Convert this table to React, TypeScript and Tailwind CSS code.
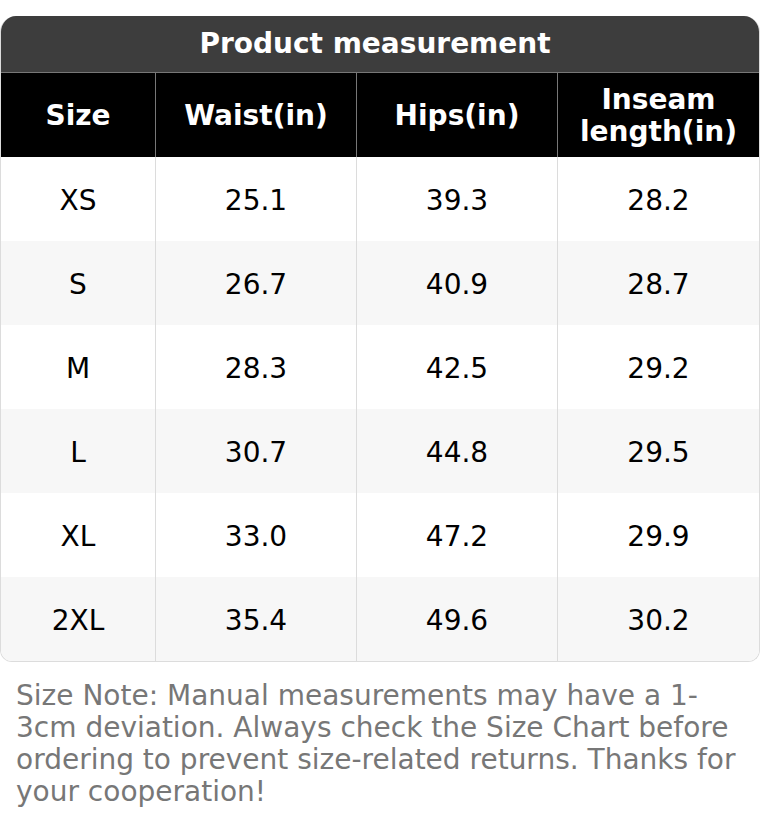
const headers = ["Size", "Waist(in)", "Hips(in)", "Inseam length(in)"];

const rows = [
    ["XS", "25.1", "39.3", "28.2"],
    ["S", "26.7", "40.9", "28.7"],
    ["M", "28.3", "42.5", "29.2"],
    ["L", "30.7", "44.8", "29.5"],
    ["XL", "33.0", "47.2", "29.9"],
    ["2XL", "35.4", "49.6", "30.2"],
];

const cols = "grid grid-cols-[154px_201px_201px_1fr]";

export default function App() {
    return (
        <div className="w-[760px] bg-white pt-4 font-['DejaVu_Sans',sans-serif]">
            <div className="rounded-t-[16px] rounded-b-[12px] overflow-hidden border border-[#dcdcdc] border-t-0">
                <div className="h-[57px] bg-[#3d3d3d] flex items-center justify-center pr-[10px] text-white text-[28px] font-bold border-b border-[#777]">
                    Product measurement
                </div>
                <div className={`${cols} bg-black text-white text-[28px] font-bold leading-[32px]`}>
                    {headers.map((h, i) => (
                        <div
                            key={h}
                            className={`h-[84px] pt-[2px] flex items-center justify-center text-center px-4 ${i > 0 ? "border-l border-[#777]" : ""}`}
                        >
                            {h}
                        </div>
                    ))}
                </div>
                {rows.map((r, ri) => (
                    <div key={r[0]} className={`${cols} ${ri % 2 ? "bg-[#f7f7f7]" : "bg-white"} text-black text-[28px]`}>
                        {r.map((c, i) => (
                            <div
                                key={i}
                                className={`h-[84px] pt-[3px] flex items-center justify-center ${i > 0 ? "border-l border-[#dcdcdc]" : ""}`}
                            >
                                {c}
                            </div>
                        ))}
                    </div>
                ))}
            </div>
            <p className="px-4 pt-[18px] text-[28px] leading-[32px] text-[#777]">
                Size Note: Manual measurements may have a 1-3cm deviation. Always check the Size Chart before ordering to prevent size-related returns. Thanks for your cooperation!
            </p>
        </div>
    );
}
